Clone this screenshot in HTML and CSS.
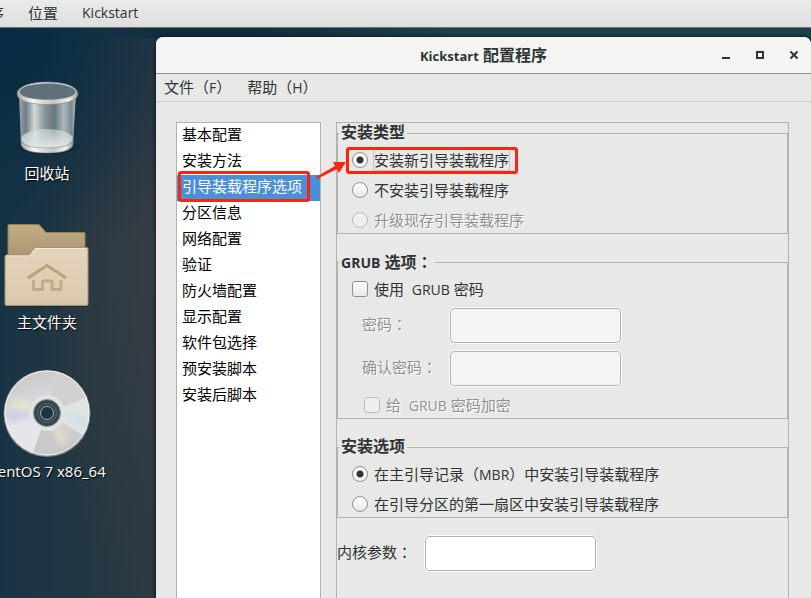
FILE: index.html
```html
<!DOCTYPE html>
<html lang="zh-CN">
<head>
<meta charset="utf-8">
<title>Kickstart 配置程序</title>
<link rel="stylesheet" href="styles.css">
</head>
<body>
<nav class="topbar">
  <a href="#">应用程序</a>
  <a href="#">位置</a>
  <a href="#"><span class="latin">Kickstart</span></a>
</nav>
<div class="desktop">
  <div class="icons">
    <a class="launcher" href="#">
      <svg width="68" height="82" viewBox="0 0 68 82" aria-hidden="true">
        <defs>
          <pattern id="mesh" width="2" height="2" patternUnits="userSpaceOnUse">
            <path d="M0 0L2 2M2 0L0 2" stroke="#e4e9e9" stroke-width=".4" opacity=".45"/>
          </pattern>
          <linearGradient id="wall">
            <stop offset="0" stop-color="#8d9a9e"/><stop offset=".12" stop-color="#54656c"/>
            <stop offset=".27" stop-color="#cfd5d5"/><stop offset=".45" stop-color="#74838a"/>
            <stop offset=".62" stop-color="#4b5e68"/><stop offset=".78" stop-color="#a0abaf"/>
            <stop offset=".92" stop-color="#667780"/><stop offset="1" stop-color="#a9b3b5"/>
          </linearGradient>
          <linearGradient id="rim">
            <stop offset="0" stop-color="#a6a8a6"/><stop offset=".25" stop-color="#f4f4f2"/>
            <stop offset=".6" stop-color="#c4c6c4"/><stop offset=".85" stop-color="#f0f0ee"/>
            <stop offset="1" stop-color="#9a9c9a"/>
          </linearGradient>
          <linearGradient id="floor" x2="0" y2="1">
            <stop offset="0" stop-color="#d5dcda" stop-opacity=".6"/><stop offset="1" stop-color="#e4e9e7"/>
          </linearGradient>
        </defs>
        <ellipse cx="35" cy="70" rx="32" ry="7" fill="#04141f" opacity=".2"/>
        <path d="M6 15L8 68Q34 80 60 68L63 15Z" fill="url(#wall)"/>
        <path d="M6 15L8 68Q34 80 60 68L63 15Z" fill="url(#mesh)"/>
        <ellipse cx="34" cy="62" rx="26" ry="10" fill="url(#floor)"/>
        <path d="M8 62Q9 71 34 71T60 62L60 68Q57 76 34 76T8 68Z" fill="url(#rim)" stroke="#777c7c" stroke-width=".5"/>
        <ellipse cx="34" cy="15" rx="29" ry="10" fill="#425663"/>
        <ellipse cx="34" cy="15" rx="29" ry="10" fill="url(#mesh)"/>
        <path fill-rule="evenodd" d="M4 17C4 1 65 1 65 17C65 31 4 31 4 17ZM7 15C7 25 62 25 62 15C62 4 7 4 7 15Z" fill="url(#rim)" stroke="#777c7c" stroke-width=".5"/>
      </svg>
      <span>回收站</span>
    </a>
    <a class="launcher" href="#">
      <svg width="88" height="88" viewBox="0 0 88 88" aria-hidden="true">
        <defs>
          <linearGradient id="back" x2="0" y2="1"><stop offset="0" stop-color="#c3ad85"/><stop offset="1" stop-color="#a8946e"/></linearGradient>
          <linearGradient id="front" x2="0" y2="1"><stop offset="0" stop-color="#e4d3ba"/><stop offset=".9" stop-color="#dccab1"/><stop offset="1" stop-color="#d0bfa7"/></linearGradient>
        </defs>
        <rect x="3" y="80" width="82" height="7" rx="2" fill="#000" opacity=".25"/>
        <path d="M5 40V5.500Q5 4.500 6 4.500H36L43 12.500H81Q82 12.500 82 13.500V40Z" fill="url(#back)" stroke="#8f7d5c"/>
        <path d="M2 84V36.500Q2 35 3.500 35H26L32 27.500H83.500Q85 27.500 85 29V84Q85 85.500 83.500 85.500H3.500Q2 85.500 2 84Z" fill="url(#front)" stroke="#a3927a"/>
        <path d="M3 36H26.500L32.500 28.500H84" fill="none" stroke="#f2e6d4"/>
        <path d="M25 58L44 45.500L63 58" fill="none" stroke="#b9a37b" stroke-width="3"/>
        <path d="M30.500 60V69.500H39.500V61H49V69.500H58V60" fill="none" stroke="#c0ab89" stroke-width="3" stroke-linejoin="round"/>
      </svg>
      <span>主文件夹</span>
    </a>
    <a class="launcher" href="#">
      <svg width="88" height="88" viewBox="0 0 88 88" aria-hidden="true">
        <defs>
          <linearGradient id="disc" x1=".3" y1="0" x2=".6" y2="1"><stop offset="0" stop-color="#c9c7c9"/><stop offset=".45" stop-color="#dddce1"/><stop offset="1" stop-color="#c6c5c3"/></linearGradient>
          <filter id="soft" x="-50%" y="-50%" width="200%" height="200%"><feGaussianBlur stdDeviation="3"/></filter>
          <clipPath id="round"><circle cx="44" cy="44" r="42.500"/></clipPath>
        </defs>
        <circle cx="44" cy="44.500" r="43.500" fill="#7e8284"/>
        <circle cx="44" cy="44" r="42.500" fill="url(#disc)"/>
        <g clip-path="url(#round)">
          <path d="M44 44L86 26V70Z" fill="#dfe3e4"/>
          <path d="M44 44L28 90H-4V50Z" fill="#e6e5ec"/>
          <path d="M44 44L54 -2L90 0V26Z" fill="#d3d1cf"/>
          <path d="M44 44L56 90L28 90Z" fill="#cac8cb"/>
          <path d="M40 42L12 30V38Z" fill="#ecebc0" filter="url(#soft)"/>
          <path d="M44 44L4 44V54Z" fill="#cdcae5" filter="url(#soft)"/>
          <path d="M44 44L66 72L58 76Z" fill="#e6e0c4" filter="url(#soft)"/>
          <path d="M44 44L88 48V58Z" fill="#cfe0e8" filter="url(#soft)"/>
        </g>
        <circle cx="44" cy="44" r="42" fill="none" stroke="#efefef"/>
        <circle cx="44" cy="44" r="18" fill="#e2e2e0"/>
        <circle cx="44" cy="44" r="13.500" fill="#34464f" stroke="#8c9496"/>
        <circle cx="44" cy="44" r="9.500" fill="none" stroke="#56666e"/>
        <circle cx="44" cy="44" r="6.500" fill="#1d3440" stroke="#a4adb0"/>
      </svg>
      <span>CentOS 7 x86_64</span>
    </a>
  </div>

  <main class="window">
    <header class="titlebar">
      <h1><span class="latin">Kickstart</span> 配置程序</h1>
      <div class="controls">
        <button type="button" aria-label="最小化"><svg width="10" height="10" viewBox="0 0 10 10"><path d="M1 8H9" stroke="#2e3436" stroke-width="2"/></svg></button>
        <button type="button" aria-label="最大化"><svg width="10" height="10" viewBox="0 0 10 10"><path d="M2 2H8V8H2Z" fill="none" stroke="#2e3436" stroke-width="2"/></svg></button>
        <button type="button" aria-label="关闭"><svg width="10" height="10" viewBox="0 0 10 10"><path d="M1.500 1.500L8.500 8.500M8.500 1.500L1.500 8.500" stroke="#2e3436" stroke-width="2"/></svg></button>
      </div>
    </header>
    <nav class="menubar">
      <button type="button">文件（<span class="latin">F</span>）</button>
      <button type="button">帮助（<span class="latin">H</span>）</button>
    </nav>
    <div class="content">
      <ul class="sections">
        <li><button type="button">基本配置</button></li>
        <li><button type="button">安装方法</button></li>
        <li class="selected"><button type="button">引导装载程序选项</button></li>
        <li><button type="button">分区信息</button></li>
        <li><button type="button">网络配置</button></li>
        <li><button type="button">验证</button></li>
        <li><button type="button">防火墙配置</button></li>
        <li><button type="button">显示配置</button></li>
        <li><button type="button">软件包选择</button></li>
        <li><button type="button">预安装脚本</button></li>
        <li><button type="button">安装后脚本</button></li>
      </ul>
      <form class="panel">
        <fieldset>
          <legend>安装类型</legend>
          <label class="choice marked"><input type="radio" name="type" checked><span class="focused">安装新引导装载程序</span></label>
          <label class="choice"><input type="radio" name="type"><span>不安装引导装载程序</span></label>
          <label class="choice off"><input type="radio" name="type" disabled><span>升级现存引导装载程序</span></label>
        </fieldset>
        <fieldset>
          <legend><span class="latin">GRUB</span> 选项<span class="colon" lang="zh-TW">：</span></legend>
          <label class="choice"><input type="checkbox"><span>使用&nbsp; <span class="latin">GRUB</span> 密码</span></label>
          <div class="field off"><label for="password">密码<span class="colon" lang="zh-TW">：</span></label><input id="password" type="password" disabled></div>
          <div class="field off"><label for="confirm">确认密码<span class="colon" lang="zh-TW">：</span></label><input id="confirm" type="password" disabled></div>
          <label class="choice nested off"><input type="checkbox" disabled><span>给&nbsp; <span class="latin">GRUB</span> 密码加密</span></label>
        </fieldset>
        <fieldset>
          <legend>安装选项</legend>
          <label class="choice"><input type="radio" name="place" checked><span>在主引导记录（<span class="latin">MBR</span>）中安装引导装载程序</span></label>
          <label class="choice"><input type="radio" name="place"><span>在引导分区的第一扇区中安装引导装载程序</span></label>
        </fieldset>
        <div class="field kernel"><label for="kernel">内核参数<span class="colon" lang="zh-TW">：</span></label><input id="kernel" type="text"></div>
      </form>
      <svg class="arrow" width="32" height="22" viewBox="0 0 32 22" aria-hidden="true"><path d="M0 19L19 8L17 4L30 4L23 15L21 11L1 21Z" fill="#fb2411"/></svg>
    </div>
  </main>
</div>
</body>
</html>
```
FILE: styles.css
```css
* { box-sizing: border-box; }

body {
  margin: 0;
  height: 100vh;
  display: flex;
  flex-direction: column;
  overflow: hidden;
  font: 15px/20px "Open Sans", "Noto Sans CJK SC", sans-serif;
  color: #2e3436;
}

button {
  border: 0;
  padding: 0;
  background: none;
  font: inherit;
  color: inherit;
}

a { color: inherit; text-decoration: none; }
.latin { font-size: 14px; }
.colon { font-family: "Noto Sans CJK TC", sans-serif; }

.topbar {
  flex: none;
  display: flex;
  align-items: center;
  gap: 24px;
  height: 28px;
  margin-left: -56px;
  padding-bottom: 2px;
  background: linear-gradient(#ebebeb, #dedede);
  border-bottom: 1px solid #6d7478;
  white-space: nowrap;
}

.desktop {
  flex: 1;
  min-height: 0;
  display: grid;
  grid-template-columns: 156px minmax(0, 1fr);
  padding-top: 9px;
  background:
    linear-gradient(90deg, #102d4000 80px, #102d40 156px, #102d40 250px, #1e4048 450px) top / 100% 10px no-repeat,
    radial-gradient(ellipse 240px 240px at 0 0, #062b44, #062b4400),
    radial-gradient(ellipse 130px 340px at 170px 240px, #383d44, #383d4400),
    linear-gradient(90deg, #183444, #2c3a42 156px);
}

.icons {
  display: flex;
  flex-direction: column;
  align-items: center;
  width: 94px;
  padding-top: 40px;
  gap: 37px;
}

.launcher {
  display: flex;
  flex-direction: column;
  align-items: center;
  gap: 4px;
  color: #fff;
  text-shadow: 1px 1px 1px #000;
  white-space: nowrap;
}

.launcher svg { display: block; }

.window {
  display: flex;
  flex-direction: column;
  min-height: 0;
  background: #e8e8e6;
  border-radius: 7px 7px 0 0;
  box-shadow: 0 0 4px #000c;
}

.titlebar {
  flex: none;
  display: grid;
  grid-template-columns: 1fr auto 1fr;
  align-items: center;
  height: 37px;
  background: #f4f4f3;
  border-bottom: 1px solid #8f918d;
  border-radius: 7px 7px 0 0;
}

.titlebar h1 { grid-column: 2; margin: 0; font-size: 16px; line-height: 20px; }
.titlebar .latin { font-size: 13px; }

.controls { display: flex; justify-content: flex-end; gap: 24px; padding-right: 12px; }
.controls svg { display: block; }

.menubar {
  flex: none;
  display: flex;
  gap: 16px;
  height: 28px;
  padding-left: 8px;
  border-bottom: 1px solid #cfcfcc;
}

.content {
  position: relative;
  flex: 1;
  min-height: 0;
  display: flex;
  gap: 15px;
  padding: 20px 22px 0 20px;
}

.sections {
  flex: none;
  width: 145px;
  margin: 0;
  padding: 0;
  list-style: none;
  background: #fff;
  border: 1px solid #b2b2af;
  border-bottom: 0;
  color: #000;
}

.sections li { height: 26px; }
.sections button { display: block; width: 100%; height: 22px; padding-left: 5px; text-align: left; white-space: nowrap; }
.sections .selected { position: relative; background: #4a90d9; color: #fff; }

.selected::after, .marked::after {
  content: "";
  position: absolute;
  border: 3px solid #fb2411;
  border-radius: 3px;
  pointer-events: none;
}

.selected::after { inset: -4px 10px -1px 1px; }
.marked::after { inset: -2px -8px -3px -6px; }

.arrow { position: absolute; left: 160px; top: 56px; }

.panel {
  flex: 1;
  min-width: 0;
  display: flex;
  flex-direction: column;
  gap: 18px;
  border: 1px solid #b2b2af;
  border-bottom: 0;
}

fieldset {
  display: flex;
  flex-direction: column;
  align-items: flex-start;
  gap: 8px;
  min-width: 0;
  margin: 0;
  padding: 6px 14px 2px;
  border: 1px solid #b2b2af;
}

legend {
  height: 20px;
  margin-left: -13px;
  padding: 0 2px;
  font-size: 16px;
  font-weight: bold;
  line-height: 18px;
}

.choice {
  position: relative;
  display: flex;
  align-items: center;
  gap: 5px;
  height: 22px;
  white-space: nowrap;
}

.choice > span { height: 22px; border: 1px solid transparent; }
.choice > .focused { border-color: #c4c4c2; }
.nested { margin-left: 12px; }

.choice input {
  appearance: none;
  width: 16px;
  height: 16px;
  margin: 0;
  border: 1px solid #8f918d;
  border-radius: 3px;
  background: linear-gradient(#fff, #e9e9e7);
}

.choice input[type="radio"] { border-radius: 50%; }
.choice input:checked { background: radial-gradient(circle, #2e3436 3px, #f6f6f5 4px); }
.choice input:disabled { border-color: #bcbcb9; background: #efefee; }

.off { color: #8e9192; text-shadow: 1px 1px 0 #fff; }

.field { display: flex; align-items: center; }
.field label { width: 88px; padding-bottom: 4px; white-space: nowrap; }
.field.off { padding-left: 10px; }

.field input {
  width: 171px;
  height: 35px;
  padding: 0 8px;
  border: 1px solid #b2b2af;
  border-radius: 4px;
  outline: 1px solid #fafafa;
  background: #fff;
  font: inherit;
}

.field input:disabled { background: #f4f4f2; }
```
